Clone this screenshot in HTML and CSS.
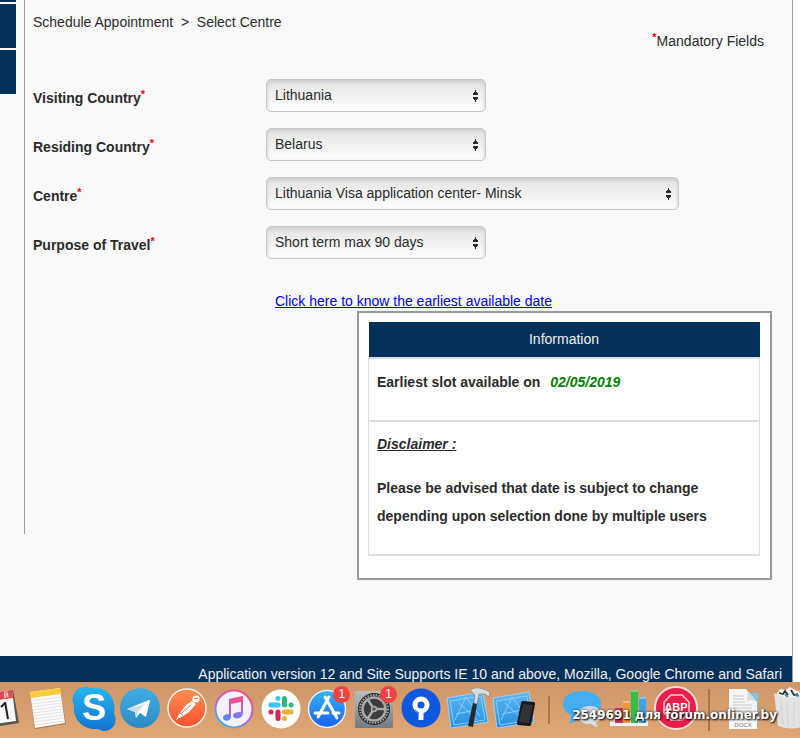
FILE: index.html
```html
<!DOCTYPE html>
<html lang="en">
<head>
  <meta charset="UTF-8" />
  <meta name="viewport" content="width=device-width, initial-scale=1.0">
  <title>Schedule Appointment - Select Centre</title>
  <link rel="stylesheet" href="styles.css">
</head>
<body>
  <div class="page">
    <div class="columns">
      <nav class="sidebar">
        <div class="side-item short"></div>
        <div class="side-item"></div>
        <div class="side-item"></div>
      </nav>

      <main class="content">
        <div class="breadcrumb">Schedule Appointment &nbsp;&gt;&nbsp; Select Centre</div>
        <div class="mandatory"><span class="req">*</span>Mandatory Fields</div>

        <form class="form">
          <div class="form-row">
            <label for="visiting">Visiting Country<span class="req">*</span></label>
            <select id="visiting"><option>Lithuania</option></select>
          </div>
          <div class="form-row">
            <label for="residing">Residing Country<span class="req">*</span></label>
            <select id="residing"><option>Belarus</option></select>
          </div>
          <div class="form-row">
            <label for="centre">Centre<span class="req">*</span></label>
            <select id="centre" class="wide"><option>Lithuania Visa application center- Minsk</option></select>
          </div>
          <div class="form-row">
            <label for="purpose">Purpose of Travel<span class="req">*</span></label>
            <select id="purpose"><option>Short term max 90 days</option></select>
          </div>
        </form>

        <a class="date-link" href="#">Click here to know the earliest available date</a>

        <div class="info-box">
          <table class="info-table">
            <thead>
              <tr><th>Information</th></tr>
            </thead>
            <tbody>
              <tr><td class="slot">Earliest slot available on <em>02/05/2019</em></td></tr>
              <tr>
                <td class="disclaimer">
                  <p class="disclaimer-title">Disclaimer :</p>
                  <p>Please be advised that date is subject to change depending upon selection done by multiple users</p>
                </td>
              </tr>
            </tbody>
          </table>
        </div>
      </main>
    </div>

    <footer class="footer">Application version 12 and Site Supports IE 10 and above, Mozilla, Google Chrome and Safari</footer>
  </div>

  <div class="dock">
    <div class="dock-icons">
      <!-- calendar -->
      <div class="dock-item">
        <svg viewBox="0 0 46 56">
          <path d="M-2 14L35 8 41 41 4 47z" fill="#555"/>
          <path d="M-2 13L34 8 38 39 2 44z" fill="#f8f8f8"/>
          <path d="M-2 13L34 8 35 16 -1 21z" fill="#dc4a4a"/>
          <text x="26" y="16" class="cal-month" transform="rotate(-7 26 16)">й</text>
          <path d="M27 20L30 37" stroke="#222" stroke-width="2"/>
          <path d="M27 21L23 25" stroke="#222" stroke-width="2"/>
        </svg>
      </div>
      <!-- notes -->
      <div class="dock-item">
        <svg viewBox="0 0 46 56">
          <path d="M5 11L35 6 41 42 10 47z" fill="#a77a4e"/>
          <path d="M5 10L35 6 40 41 10 46z" fill="#fcfcfa"/>
          <path d="M5 10L35 6 36 12 6 16z" fill="#fdcb3c"/>
          <path d="M6 19l30-4M7 22l30-4M7 25l30-4M8 28l30-4M8 31l30-4M8 34l30-4M9 37l30-4M9 40l30-4M10 43l30-4" stroke="#d9d9d9" stroke-width=".7"/>
        </svg>
      </div>
      <!-- skype -->
      <div class="dock-item">
        <svg viewBox="0 0 46 56">
          <defs><linearGradient id="sky" x2="0" y2="1"><stop stop-color="#25b7f0"/><stop offset="1" stop-color="#1273d0"/></linearGradient></defs>
          <path d="M12 5C16 4 18 6 20 6C36 4 45 18 42 31C46 39 42 49 32 49C29 49 28 47 25 47C10 48 0 36 2 23C-2 15 3 6 12 5z" fill="url(#sky)"/>
          <text x="22" y="38" class="skype-s">S</text>
        </svg>
      </div>
      <!-- telegram -->
      <div class="dock-item">
        <svg viewBox="0 0 46 56">
          <defs><linearGradient id="tg" x2="0" y2="1"><stop stop-color="#40aee4"/><stop offset="1" stop-color="#2a8bc5"/></linearGradient></defs>
          <circle cx="22" cy="26" r="20" fill="url(#tg)"/>
          <path d="M9 27L31 18Q32 18 32 19L28 35 22 31 18 36 17 30z" fill="#fff"/>
          <path d="M17 30L28 21 19 31 18 36zM9 27L26 22 17 30z" fill="#c9ddea"/>
        </svg>
      </div>
      <!-- postman -->
      <div class="dock-item">
        <svg viewBox="0 0 46 56">
          <defs><linearGradient id="pm" x2="0" y2="1"><stop stop-color="#ff9052"/><stop offset="1" stop-color="#f9502f"/></linearGradient></defs>
          <circle cx="22" cy="26" r="19" fill="url(#pm)" stroke="#fff3e8" stroke-width="1.5"/>
          <circle cx="31" cy="17" r="3.6" fill="#fff"/>
          <path d="M27 19L31 22 24 30 18 34 11 38 14 32 21 23z" fill="#fff"/>
          <path d="M17 31l9-8M29 17l4-1M18 33l-3-2" stroke="#f0663d"/>
        </svg>
      </div>
      <!-- itunes -->
      <div class="dock-item">
        <svg viewBox="0 0 46 56">
          <defs>
            <linearGradient id="ring" x1=".8" y1="0" x2=".2" y2="1"><stop stop-color="#fb4a78"/><stop offset=".5" stop-color="#bb62dc"/><stop offset="1" stop-color="#35b9ef"/></linearGradient>
            <linearGradient id="note" x2="0" y2="1"><stop stop-color="#fb4b6f"/><stop offset=".55" stop-color="#c45fe0"/><stop offset="1" stop-color="#4a90f0"/></linearGradient>
          </defs>
          <circle cx="22" cy="27" r="18.5" fill="#f3f1fa" stroke="url(#ring)" stroke-width="2"/>
          <path d="M17 17L31 14V31C31 37 22 38 21 34C21 31 24 30 29 30V20L19 22V34C19 40 11 40 11 36C11 33 14 32 17 32z" fill="url(#note)"/>
        </svg>
      </div>
      <!-- slack -->
      <div class="dock-item">
        <svg viewBox="0 0 46 56">
          <circle cx="22" cy="27" r="19.5" fill="#fff"/>
          <g stroke-width="5" stroke-linecap="round">
            <path d="M12 23h7M19 16.500v0" stroke="#36c5f0"/>
            <path d="M25.500 16.500v6.500M32 23h0" stroke="#2eb67d"/>
            <path d="M25.500 30H32M25.500 36.500v0" stroke="#ecb22e"/>
            <path d="M19 30v6.500M12 30h0" stroke="#e01e5a"/>
          </g>
        </svg>
      </div>
      <!-- app store -->
      <div class="dock-item">
        <svg viewBox="0 0 46 56">
          <defs><linearGradient id="as" x2="0" y2="1"><stop stop-color="#2fb5f6"/><stop offset="1" stop-color="#1b61ea"/></linearGradient></defs>
          <circle cx="22" cy="27" r="18.5" fill="url(#as)" stroke="#e8eef5" stroke-width="1.5"/>
          <path d="M24 15L13 35M20 15l12 21M10 31h13M28 31h6" stroke="#fff" stroke-width="3" stroke-linecap="round"/>
        </svg>
        <span class="badge">1</span>
      </div>
      <!-- system preferences -->
      <div class="dock-item">
        <svg viewBox="0 0 46 56">
          <defs><linearGradient id="sp" x2="0" y2="1"><stop stop-color="#b5bfc2"/><stop offset="1" stop-color="#747b80"/></linearGradient></defs>
          <rect x="3" y="9" width="38" height="37" rx="1" fill="url(#sp)"/>
          <circle cx="22" cy="27" r="16" fill="#2b2b2b"/>
          <circle cx="22" cy="27" r="14" fill="none" stroke="#a8a8a8" stroke-width="2" stroke-dasharray="1.500 1.300"/>
          <circle cx="22" cy="27" r="11.500" fill="#3b3b3b" stroke="#aaa" stroke-width="2.500"/>
          <path d="M22 27H33M22 27L16 18M22 27L16 36" stroke="#aaa" stroke-width="2.500"/>
          <circle cx="22" cy="27" r="2.500" fill="#555" stroke="#aaa" stroke-width="1.500"/>
        </svg>
        <span class="badge">1</span>
      </div>
      <!-- sourcetree -->
      <div class="dock-item">
        <svg viewBox="0 0 46 56">
          <circle cx="22" cy="26" r="19.500" fill="#0d58dc"/>
          <circle cx="22" cy="23" r="6" fill="none" stroke="#fff" stroke-width="5"/>
          <path d="M22 29V38" stroke="#fff" stroke-width="5"/>
          <path d="M16 28l4 3" stroke="#0d58dc" stroke-width="1"/>
        </svg>
      </div>
      <!-- xcode -->
      <div class="dock-item">
        <svg viewBox="0 0 46 56">
          <defs><linearGradient id="xc" x2="0" y2="1"><stop stop-color="#5db7f1"/><stop offset="1" stop-color="#2690e4"/></linearGradient></defs>
          <path d="M1 16L37 10 42 40 5 46z" fill="url(#xc)" stroke="#a8d8f6" stroke-width=".8"/>
          <path d="M4 19l31-5 4 24-31 5zM9 38l11-23 14 19M10 32l20-4M13 21l18 17" fill="none" stroke="#8dcdf6"/>
          <path d="M27 21L31 22 27 45 22 44z" fill="#26292c"/>
          <path d="M24 9C28 4 34 6 40 8L44 10 43 15 39 12 33 12 31 22 28 21 29 13 26 10z" fill="#dadddd" stroke="#777" stroke-width=".6"/>
        </svg>
      </div>
      <!-- simulator -->
      <div class="dock-item">
        <svg viewBox="0 0 46 56">
          <path d="M1 16L37 10 42 40 5 46z" fill="url(#xc)" stroke="#a8d8f6" stroke-width=".8"/>
          <path d="M4 19l31-5 4 24-31 5zM9 38l11-23 14 19M10 32l20-4M13 21l18 17" fill="none" stroke="#8dcdf6"/>
          <path d="M31 19L42 20Q43 20 43 22L39 43Q39 44 37 44L26 43Q25 43 25 41L29 21Q29 19 31 19z" fill="#17181b"/>
          <path d="M31 22l10 1-4 18-10-1z" fill="#303238"/>
        </svg>
      </div>
      <div class="divider"></div>
      <!-- messages -->
      <div class="dock-item">
        <svg viewBox="0 0 46 56">
          <path d="M23 9C35 9 42 15 42 22C42 31 33 36 21 35C18 38 14 41 10 42C12 39 12 36 12 33C7 31 4 27 4 22C4 15 11 9 23 9z" fill="#45aef0"/>
          <path d="M31 24C38 24 42 28 42 33C42 37 40 39 37 40C37 42 38 43 39 45C36 45 34 43 32 42C24 43 19 38 19 33C19 28 24 24 31 24z" fill="#d5dde4"/>
        </svg>
      </div>
      <!-- numbers -->
      <div class="dock-item">
        <svg viewBox="0 0 46 56">
          <path d="M4 30h38v13H4z" fill="#e6e0d8" opacity=".6"/>
          <path d="M4 40h38v4H4z" fill="#f2f2f2"/>
          <path d="M9 26h8v15H9z" fill="#c93560"/>
          <path d="M17 19h7v22h-7z" fill="#f2963b"/>
          <path d="M25 8h7v33h-7z" fill="#35bd45"/>
          <path d="M33 15h7v26h-7z" fill="#3da4e8"/>
          <path d="M17 19h7v2h-7zM25 8h7v2h-7zM33 15h7v2h-7z" fill="#fff" opacity=".35"/>
        </svg>
      </div>
      <!-- adblock plus -->
      <div class="dock-item">
        <svg viewBox="0 0 46 56">
          <circle cx="23" cy="26" r="21" fill="#eb1d4b" stroke="#f6dfd9" stroke-width="2"/>
          <path d="M18 13H29L36 20V31L29 38H18L11 31V20z" fill="none" stroke="#f8d0d6" stroke-width="1.500"/>
          <text x="23" y="29" class="abp">ABP</text>
        </svg>
      </div>
      <div class="divider tall"></div>
      <!-- docx file -->
      <div class="dock-item">
        <svg viewBox="0 0 46 56">
          <path d="M25 11h14v30H25z" fill="#7cc5ea"/>
          <path d="M10 7H27L38 20V47H10z" fill="#f7f7f7"/>
          <path d="M27 7L38 20C34 18 31 18 28 19C29 15 29 11 27 7z" fill="#dadada"/>
          <path d="M14 14h11M14 17h11M14 20h12M14 23h19M14 26h19M14 29h19M14 32h19M14 35h19" stroke="#c5c5c5"/>
          <text x="24" y="45" class="docx">DOCX</text>
        </svg>
      </div>
      <!-- trash -->
      <div class="dock-item">
        <svg viewBox="0 0 46 56">
          <path d="M10 13L14 7 20 8 24 5 31 9 38 8 42 13 38 17H13z" fill="#f2f2f0"/>
          <path d="M13 11l4 1 2-3 3 4M25 8l3 5 4-1M34 9l3 4" stroke="#333" stroke-width="1.800" fill="none"/>
          <path d="M19 12l3 3M29 13l4 1" stroke="#2b8bc4" stroke-width="2"/>
          <path d="M8 11Q25 20 43 11L39 44Q25 49 12 44z" fill="#e2e2e2"/>
          <path d="M15 19l2 23M21 20l1 24M28 20v24M35 18l-1 24" stroke="#d6d6d6" stroke-width="1.500"/>
        </svg>
      </div>
    </div>
    <div class="watermark">2549691 для forum.onliner.by</div>
  </div>
</body>
</html>
```

FILE: styles.css
```css
* { margin: 0; padding: 0; box-sizing: border-box; }

body {
  font-family: "Liberation Sans", Arial, sans-serif;
  font-size: 14px;
  line-height: 16px;
  color: #2b2b2b;
  background: #fff;
  min-height: 100vh;
  display: flex;
  flex-direction: column;
  overflow-x: hidden;
}

.page {
  flex: 1;
  display: flex;
  flex-direction: column;
  margin-right: 7px;
  background: #f9f9f9;
  border-right: 1px solid #a39a9b;
}

.columns {
  flex: 1;
  display: flex;
  align-items: flex-start;
}

.sidebar {
  width: 25px;
  min-height: 534px;
  padding-right: 8px;
  border-right: 1px solid #a39a9b;
  display: flex;
  flex-direction: column;
  gap: 2px;
}

.side-item {
  height: 44px;
  background: #04305a;
}

.side-item.short { height: 2px; }

.content {
  flex: 1;
  padding: 14px 20px 74px 8px;
}

.mandatory {
  text-align: right;
  padding-right: 8px;
  margin-top: 3px;
}

.req {
  color: #f00;
  font-size: 11px;
  font-weight: bold;
  line-height: 0;
  position: relative;
  top: -5px;
}

.form {
  display: grid;
  gap: 16px;
  margin-top: 30px;
}

.form-row {
  display: grid;
  grid-template-columns: 233px 1fr;
  align-items: center;
}

.form-row label {
  font-weight: bold;
  padding-top: 5px;
}

select {
  appearance: none;
  width: 220px;
  height: 33px;
  padding: 0 24px 1px 8px;
  font: inherit;
  color: #2b2b2b;
  border: 1px solid #c8c8c8;
  border-radius: 5px;
  background:
    conic-gradient(from 147deg at 50% 0, #2b2b2b 66deg, transparent 0) right 6px top 10px / 7px 5px no-repeat,
    conic-gradient(from -33deg at 50% 100%, #2b2b2b 66deg, transparent 0) right 6px top 17px / 7px 5px no-repeat,
    linear-gradient(#e3e3e3, #fff);
  box-shadow: inset 0 2px 4px #ccc;
}

select.wide { width: 413px; }

.date-link {
  display: block;
  width: fit-content;
  margin: 34px 0 2px 242px;
  color: #0000ee;
}

.info-box {
  width: 415px;
  margin-left: auto;
  padding: 9px 10px 22px 9px;
  background: #fff;
  border: 2px solid #999;
}

.info-table {
  width: 100%;
  border-collapse: collapse;
}

.info-table th {
  height: 36px;
  padding-bottom: 2px;
  font-weight: normal;
  color: #f0f0f0;
  background: #04305a;
}

.info-table td {
  border: 1px solid #ddd;
  border-width: 2px 1px;
  padding: 0 8px;
  vertical-align: top;
  font-weight: bold;
  line-height: 28px;
}

.info-table .slot {
  height: 63px;
  padding-top: 9px;
}

.slot em {
  color: #008000;
  margin-left: 6px;
}

.info-table .disclaimer {
  height: 134px;
  padding-top: 8px;
}

.disclaimer-title {
  font-style: italic;
  text-decoration: underline;
  margin-bottom: 16px;
}

.footer {
  height: 26px;
  padding: 10px 10px 0 0;
  text-align: right;
  white-space: nowrap;
  color: #f0f0f0;
  background: #04305a;
}

.dock {
  position: relative;
  height: 56px;
  overflow: hidden;
  background: linear-gradient(#cf9669, #dfa775);
}

.dock-icons {
  display: flex;
  margin: 0 -13px 0 -22px;
}

.dock-item {
  flex: 1;
  position: relative;
}

.dock-item svg {
  display: block;
  width: 46px;
  height: 56px;
  overflow: visible;
}

.divider {
  width: 20px;
  height: 28px;
  margin-top: 14px;
  background: linear-gradient(#a87650, #a87650) 9px 0 / 2px 100% no-repeat;
}

.divider.tall {
  height: 42px;
  margin-top: 7px;
}

.badge {
  position: absolute;
  left: 28px;
  top: 4px;
  width: 17px;
  height: 17px;
  border-radius: 50%;
  background: #f4403f;
  color: #fff;
  font-size: 12px;
  line-height: 17px;
  text-align: center;
}

.cal-month { font-size: 9px; fill: #fff; }
.skype-s { font-size: 36px; font-weight: bold; fill: #fff; text-anchor: middle; }
.abp { font-size: 11px; font-weight: bold; fill: #fff; text-anchor: middle; }
.docx { font-size: 6px; fill: #777; text-anchor: middle; }

.watermark {
  position: absolute;
  right: 23px;
  bottom: 15px;
  font-family: "DejaVu Sans", sans-serif;
  font-size: 12px;
  font-weight: bold;
  color: #fff;
  text-shadow: 1px 1px 2px #000, 0 0 3px #333;
}
```
